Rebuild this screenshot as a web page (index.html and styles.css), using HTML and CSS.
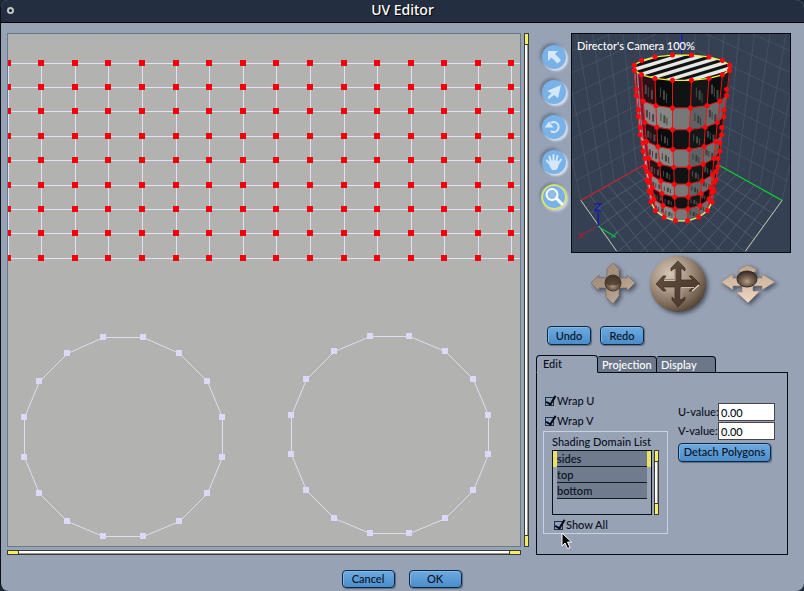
FILE: index.html
```html
<!DOCTYPE html>
<html lang="en">
<head>
<meta charset="utf-8">
<title>UV Editor</title>
<link rel="stylesheet" href="styles.css">
</head>
<body>
<div class="window">
  <header class="titlebar">
    <button class="close" aria-label="Close"></button>
    <h1>UV Editor</h1>
  </header>

  <main class="workspace">
    <section class="editor" aria-label="UV map">
      <div class="editor-row">
        <svg id="uv" class="uv" viewBox="7 33 514 514"></svg>
        <div class="slider vertical"><button aria-label="Top limit"></button><button aria-label="Bottom limit"></button></div>
      </div>
      <div class="slider horizontal"><button aria-label="Left limit"></button><button aria-label="Right limit"></button></div>
    </section>

    <aside class="side">
      <div class="preview">
        <div class="tools">
          <button class="tool" aria-label="Select"><svg viewBox="0 0 24 24"><path d="M6 6h10l-3 3 6 6-3.500 3.500-6-6-3.500 3.500z"/></svg></button>
          <button class="tool" aria-label="Move"><svg viewBox="0 0 24 24"><path d="M19 5l-3 13-4-3-5 4-1.500-1.500 4-4.500-4.500-2z"/></svg></button>
          <button class="tool" aria-label="Rotate"><svg viewBox="0 0 24 24"><path class="stroke" d="M9.500 7.500a5 5 0 1 1 0 9"/><path d="M2.500 12.500h9l-4.500-6z"/></svg></button>
          <button class="tool" aria-label="Pan"><svg viewBox="0 0 24 24"><path class="finger" d="M8 14L4.800 10.500M9 12L7.500 6.500M11.500 11.500V5M14 12L15.500 6M16 14L19 9.500"/><path d="M7.500 10.500h8.500l1 2-1 5-2 2.500h-4l-3-5z"/></svg></button>
          <button class="tool active" aria-label="Zoom"><svg viewBox="0 0 24 24"><circle class="lens" cx="10" cy="9.500" r="5.500"/><path class="handle" d="M14.500 13.500L20 19"/></svg></button>
        </div>
        <div class="viewport">
          <svg id="scene" viewBox="571 33 220 220"></svg>
          <span class="camera">Director's Camera 100%</span>
        </div>
      </div>

      <div class="navigation">
        <button class="nav" aria-label="Move in plane">
          <svg width="46" height="46" viewBox="0 0 46 46">
            <defs>
              <linearGradient id="tan" x1="0" y1="0" x2="1" y2="1"><stop offset="0" stop-color="#a18b78"/><stop offset=".5" stop-color="#aa9582"/><stop offset="1" stop-color="#cbb7a3"/></linearGradient>
              <linearGradient id="sand" x1="0" y1="0" x2="0" y2="1"><stop offset="0" stop-color="#bca48e"/><stop offset="1" stop-color="#f0d9c4"/></linearGradient>
              <linearGradient id="cross" x1="0" y1="0" x2="1" y2="1"><stop offset="0" stop-color="#65503e"/><stop offset="1" stop-color="#45352a"/></linearGradient>
              <radialGradient id="knob" cx=".5" cy=".65" r=".65"><stop offset="0" stop-color="#b8a28e"/><stop offset=".35" stop-color="#806b59"/><stop offset="1" stop-color="#33271e"/></radialGradient>
              <radialGradient id="ball" cx=".36" cy=".32" r=".72"><stop offset="0" stop-color="#d6c6b6"/><stop offset=".45" stop-color="#a99684"/><stop offset=".8" stop-color="#796553"/><stop offset="1" stop-color="#544334"/></radialGradient>
            </defs>
            <path fill="url(#tan)" stroke="#766656" stroke-width=".6" d="M23 2l6 6v9h8v-3l8 8-8 8v-3h-8v8l-6 8-7-7v-9H9v3l-8-8 8-8v3h8V8z"/>
            <circle cx="23" cy="22" r="8" fill="url(#knob)" stroke="#49382b"/><path d="M15 22a8 8 0 0 1 16 0q-8 5-16 0z" fill="#4b3a2d" opacity=".75"/>
          </svg>
        </button>
        <button class="nav" aria-label="Pan camera">
          <svg width="58" height="58" viewBox="0 0 58 58">
            <circle cx="29" cy="29" r="28" fill="url(#ball)"/>
            <path fill="url(#cross)" stroke="#3d2e22" stroke-width=".7" d="M29 6l7 7v3l-4-3v12h12l-4-4h3l8 8-8 7h-3l4-4H32v13l4-3v3l-7 7-6-7v-3l3 3V32H14l3 4h-3l-7-7 7-8h3l-3 4h12V13l-4 3v-3z"/>
            <path d="M15 25.500h11V14M32 44V32.500h13" fill="none" stroke="#cebdab" stroke-width="1"/><path d="M43 36l7-6" stroke="#ead9c7" stroke-width="1.200"/>
          </svg>
        </button>
        <button class="nav" aria-label="Move along ground">
          <svg width="56" height="46" viewBox="0 0 56 46">
            <path fill="url(#sand)" stroke="#907d6b" stroke-width=".6" d="M28 4l8 4v3h-3v6h9v-4l13 8-13 8v-4h-9v5h7L28 42 16 31h6v-6h-9v4L1 21l12-8v4h9v-6h-3V8z"/>
            <ellipse cx="27" cy="18" rx="10" ry="8" fill="url(#knob)" stroke="#35291f"/>
          </svg>
        </button>
      </div>

      <div class="history"><button class="btn">Undo</button><button class="btn">Redo</button></div>

      <div class="tabs" role="tablist">
        <button class="tab selected" role="tab" aria-selected="true">Edit</button>
        <button class="tab" role="tab" aria-selected="false">Projection</button>
        <button class="tab" role="tab" aria-selected="false">Display</button>
      </div>
      <div class="panel" role="tabpanel">
        <div class="options">
          <label class="check"><input type="checkbox" checked>Wrap U</label>
          <label class="check"><input type="checkbox" checked>Wrap V</label>
          <div class="domains">
            <h2>Shading Domain List</h2>
            <div class="list-row">
              <div class="list" role="listbox" aria-label="Shading Domain List">
                <button class="item chosen" role="option" aria-selected="true">sides</button>
                <button class="item" role="option" aria-selected="false">top</button>
                <button class="item" role="option" aria-selected="false">bottom</button>
              </div>
              <div class="slider vertical"><button aria-label="Scroll up"></button><button aria-label="Scroll down"></button></div>
            </div>
            <label class="check"><input type="checkbox" checked>Show All</label>
            <svg class="pointer" width="12" height="18" viewBox="0 0 12 18"><path d="M1 1v13l3-3 2.500 5.500 2.500-1-2.500-5.500h4z" fill="#000" stroke="#fff"/></svg>
          </div>
        </div>
        <div class="values">
          <label for="u">U-value:</label><input id="u" type="text" value="0.00">
          <label for="v">V-value:</label><input id="v" type="text" value="0.00">
          <button class="btn detach">Detach Polygons</button>
        </div>
      </div>
    </aside>
  </main>

  <footer class="actions"><button class="btn">Cancel</button><button class="btn">OK</button></footer>
</div>
<script src="scene.js"></script>
</body>
</html>
```
FILE: scene.js
```js
const xs = [8, 41, 75, 108, 142, 176, 209, 243, 276, 310, 344, 377, 411, 444, 478, 511];
const ys = [63, 87, 111, 136, 160, 185, 209, 233, 258];
const discs = [
  [[103,337],[143,337],[179,353],[207,381],[222,417],[222,457],[207,493],[179,521],[143,536],[103,536],[67,521],[39,493],[24,457],[24,417],[39,381],[67,353]],
  [[370,336],[409,336],[445,351],[473,379],[488,415],[488,454],[473,490],[445,518],[409,533],[370,533],[334,518],[306,490],[291,454],[291,415],[306,379],[334,351]]
];
const line = (x1, y1, x2, y2, c, w = 1) => `<path d="M${x1} ${y1}L${x2} ${y2}" stroke="${c}" stroke-width="${w}" fill="none"/>`;
const poly = (pts, attrs) => `<polygon points="${pts.map(p => p.join()).join(' ')}" ${attrs}/>`;

// Flat UV map: side mesh, then the two caps.
let uv = '';
ys.forEach(y => uv += line(7, y + .5, 521, y + .5, '#e3e1f7'));
xs.forEach(x => uv += line(x + .5, 63, x + .5, 258, '#e3e1f7'));
xs.forEach(x => ys.forEach(y => uv += `<rect x="${x - 3}" y="${y - 3}" width="6" height="6" fill="#f40008"/>`));
discs.forEach(d => {
  uv += poly(d.map(p => [p[0] + .5, p[1] + .5]), 'fill="none" stroke="#e0ddf0"');
  d.forEach(p => uv += `<rect x="${p[0] - 3}" y="${p[1] - 3}" width="6" height="6" fill="#dcd8f8"/>`);
});
document.getElementById('uv').innerHTML = uv;

// Perspective room.
const mix = (a, b, t) => [a[0] + (b[0] - a[0]) * t, a[1] + (b[1] - a[1]) * t];
const L = [580, 201], B = [681, 144], R = [783, 201], F = [681, 345];
const LT = [540, 20], BT = [681, -40], RT = [823, 20];
let s = '<rect x="571" y="33" width="220" height="220" fill="#354052"/>';
const net = (a, b, c, d, n, col) => {
  for (let i = 0; i <= n; i++) {
    const t = i / n;
    s += line(...mix(a, b, t), ...mix(c, d, t), col, .7) + line(...mix(a, c, t), ...mix(b, d, t), col, .7);
  }
};
net(L, B, LT, BT, 9, '#4c596b');
net(B, R, BT, RT, 9, '#4c596b');
net(L, B, F, R, 11, '#5a6879');
s += line(...L, ...B, '#c31e2b', 1.2) + line(...B, ...R, '#00d52b', 1.3);
s += line(...L, 616, 252, '#c4c6ae') + line(...R, 746, 252, '#c4c6ae');
s += line(681.5, 33, 681.5, 60, '#1717c4', 1.5);
s += line(597.5, 228, 597.5, 213, '#1616bd', 1.5) + line(597, 227, 578, 237, '#a92232') + line(597, 227, 615, 238, '#09bb43', 1.3) + line(611, 239, 617, 233, '#09bb43');
s += '<path d="M594 204.500h6l-6 7h7" fill="none" stroke="#1616bd" stroke-width="1.300"/><path d="M577 234l6 5M578 240l4-7" stroke="#a92232" fill="none"/>';

// Textured cylinder with its selected vertices.
const cy = [67, 92, 113, 131, 147, 163, 176, 187, 198];
const rt = [731, 728, 725, 723, 721, 719, 717, 715, 713];
const lf = [633, 635, 637, 639, 642, 644, 646, 648, 650];
const ry = [13, 16, 17, 19, 21, 22, 22, 23, 24];
const ring = i => Array.from({length: 16}, (_, k) => {
  const a = (k * 22.5 + 11.25) * Math.PI / 180;
  return [(rt[i] + lf[i]) / 2 + (rt[i] - lf[i]) / 2 * Math.cos(a), cy[i] + ry[i] * Math.sin(a)];
});
const rings = cy.map((_, i) => ring(i));
const dark = ['#090c0c', '#171919', '#0b0e0e', '#141717', '#101313', '#090b0b', '#281116', '#651124', '#b9b7bb'];
const light = ['#4f5252', '#5d6060', '#6c6e6e', '#606363', '#777979', '#858784', '#8c8384', '#821a31', '#c9c4c8'];
for (let i = 0; i < 8; i++) {
  for (let k = -1; k < 8; k++) {
    const j = (k + 16) % 16, m = k + 1;
    const q = [rings[i][j], rings[i][m], rings[i + 1][m], rings[i + 1][j]];
    const col = (i % 2 ? light : dark)[k + 1];
    s += poly(q, `fill="${col}" stroke="${col}" stroke-width=".5"`);
    if (k > 0 && k < 6 && k !== 3) {
      const top = mix(q[0], q[1], .5), bot = mix(q[3], q[2], .5);
      for (let n = 0; n < 3; n++) {
        const p = mix(top, bot, .3 + n * .1);
        s += `<rect x="${p[0] - 4 + n * 3}" y="${p[1]}" width="${1 + (k + n) % 2}" height="${(bot[1] - top[1]) * .35}" fill="${i % 2 ? '#242929' : '#5d625f'}" opacity=".7"/>`;
      }
    }
    if (k === 6) s += line(...mix(q[0], q[1], .6), ...mix(q[3], q[2], .6), '#9d7c84', 1.5);
  }
}
s += '<clipPath id="lid">' + poly(rings[0], '') + '</clipPath>' + poly(rings[0], 'fill="#101312"') + '<g clip-path="url(#lid)">';
for (let i = -4; i < 8; i++) {
  const y = 56 + i * 7;
  s += `<path d="M630 ${y + 14}L735 ${y - 18}" stroke="#e7e8e4" stroke-width="3.500"/>`;
}
s += '</g>';
for (let k = 0; k < 8; k++) s += `<polyline points="${rings.map(r => r[k].join()).join(' ')}" fill="none" stroke="#ed1318" stroke-width="1"/>`;
rings.forEach((r, i) => {
  if (i && i < 8) s += `<polyline points="${r.slice(0, 8).map(p => p.join()).join(' ')}" fill="none" stroke="#ed1318"/>`;
});
s += poly(rings[0], 'fill="none" stroke="#f5ed31" stroke-width="1.300"');
s += `<polyline points="${rings[8].slice(0, 8).map(p => p.join()).join(' ')}" fill="none" stroke="#f5ed72" stroke-width="1.300"/>`;
rings.forEach((r, i) => r.forEach((p, k) => {
  if (k < 8 || i === 0 || k === 8 || k === 15) s += `<path d="M${p[0] - 2.5} ${p[1] - 1.5}h1v-1h3v1h1v3h-1v1h-3v-1h-1z" fill="#fa080c"/>`;
}));
document.getElementById('scene').innerHTML = s;
```
FILE: styles.css
```css
* { box-sizing: border-box; }
body {
  margin: 0;
  background: #1c2737;
  color: #08101c;
  font: 11px/16px Lato, "Noto Sans", sans-serif;
  font-weight: 500;
}
button, input { font: inherit; color: inherit; margin: 0; padding: 0; border: 0; }
h1, h2 { margin: 0; font-weight: inherit; }
svg { display: block; }

.window {
  min-height: 100vh;
  background: #98a2b5;
  border-left: 1px solid #0c1119;
  border-radius: 8px;
  overflow: hidden;
}
.titlebar {
  display: grid;
  grid-template-columns: 20px 1fr 20px;
  align-items: center;
  height: 23px;
  padding: 0 6px 2px;
  background: #232e40;
  border-bottom: 1px solid #000;
}
.close {
  width: 7px;
  height: 7px;
  background: #111821;
  border: 2px solid #c3c5c8;
  border-radius: 50%;
}
.titlebar h1 { color: #fff; font-family: "Noto Sans", sans-serif; font-size: 14px; line-height: 20px; text-align: center; text-shadow: 1px 1px 1px #000; }

.workspace { display: flex; gap: 7px; padding: 10px 13px 0 6px; }
.editor { flex: 1; min-width: 0; }
.editor-row { display: flex; gap: 3px; margin-bottom: 3px; }
.uv { flex: 1; min-width: 0; background: #b2b2b1; outline: 1px solid #68798a; outline-offset: -1px; }
.slider {
  display: flex;
  justify-content: space-between;
  width: 5px;
  border: 1px solid #3b3b35;
  background: linear-gradient(90deg, #fff 60%, #9c918d 60%);
}
.slider.vertical { flex-direction: column; }
.slider.horizontal { width: auto; height: 5px; margin-right: 8px; background: linear-gradient(#fff 60%, #9c918d 60%); }
.slider button { background: #f1ee68; }
.vertical button { height: 11px; border-bottom: 1px solid #3b3b10; }
.vertical button:last-child { border-top: 1px solid #3b3b10; border-bottom: 0; }
.horizontal button { width: 11px; border-right: 1px solid #3b3b10; }
.horizontal button:last-child { border-left: 1px solid #3b3b10; border-right: 0; }

.side { display: flex; flex-direction: column; width: 255px; }
.preview { display: flex; }
.tools { display: flex; flex-direction: column; align-items: center; gap: 11px; width: 35px; padding-top: 12px; }
.tool {
  width: 24px;
  height: 24px;
  border-radius: 50%;
  background: #78b2e8;
  box-shadow: 2px 2px 2px #d4deec, -2px -2px 3px #6e788a, 0 0 1px 1px #a3bddb;
}
.tool svg { width: 24px; height: 24px; fill: #d5e7fa; }
.tool .stroke, .tool .finger, .tool .lens, .tool .handle { fill: none; stroke: #d5e7fa; stroke-width: 2; stroke-linecap: round; }
.tool.active { box-shadow: inset 0 0 0 1px #e5ec70, 0 0 1px 1px #d8df75, 2px 2px 3px #d4deec, -2px -2px 3px #6e788a; }
.tool .lens { stroke: #fff; fill: #92bde4; }
.tool .handle { stroke: #fff; stroke-width: 3; }
.viewport { position: relative; flex: 1; border: 1px solid #050a12; overflow: hidden; }
.viewport svg { width: 100%; }
.camera { position: absolute; left: 5px; top: 4px; color: #fff; }

.navigation { display: flex; align-items: center; gap: 13px; padding: 2px 0 0 54px; }
.nav { background: none; filter: drop-shadow(2px 2px 2px #465061); }

.btn {
  min-width: 44px;
  height: 19px;
  background: linear-gradient(#6daae0, #4b8dca);
  border: 1px solid #0c2744;
  border-radius: 4px;
  box-shadow: 1px 1px 1px #5c6b7f, inset 1px 1px 0 #80b8e8;
  line-height: 16px;
}
.history { display: flex; gap: 9px; padding: 13px 11px 10px; }

.tabs { display: flex; align-items: flex-end; height: 18px; margin-bottom: -1px; }
.tab {
  width: 59px;
  height: 17px;
  padding-left: 4px;
  text-align: left;
  color: #fff;
  background: #6d778a;
  border: 1px solid #050a12;
  border-left: 0;
  border-radius: 2px 4px 0 0;
}
.tab.selected {
  width: 62px;
  height: 18px;
  padding-left: 6px;
  color: inherit;
  background: #98a2b5;
  border-left: 1px solid #050a12;
  border-bottom-color: #98a2b5;
  border-radius: 4px 4px 0 0;
  z-index: 1;
}
.panel {
  display: flex;
  gap: 10px;
  flex: 1;
  margin-right: 3px;
  padding: 18px 12px 20px 6px;
  border: 1px solid #050a12;
}
.options { width: 125px; }
.check { display: flex; align-items: center; gap: 3px; height: 20px; padding-left: 2px; }
.check input {
  appearance: none;
  width: 9px;
  height: 9px;
  border: 1px solid #223044;
  background: #8ba1c0;
  position: relative;
}
.check input:checked::before {
  content: "";
  position: absolute;
  left: 2px;
  top: -4px;
  width: 4px;
  height: 9px;
  border: solid #050a12;
  border-width: 0 2px 2px 0;
  transform: rotate(32deg);
}
.domains { position: relative; border: 1px solid #c7d2e0; padding: 2px 8px 0; height: 103px; }
.domains h2 { font-size: 11px; line-height: 16px; white-space: nowrap; }
.list-row { display: flex; gap: 2px; }
.list { width: 100px; height: 65px; border: 1px solid #08101c; }
.item {
  display: block;
  width: 90px;
  height: 16px;
  margin-left: 4px;
  background: #707b8e;
  border-bottom: 1px solid #121c29;
  text-align: left;
  line-height: 14px;
}
.item.chosen { box-shadow: -4px 0 #e8e362, 4px 0 #e8e362; }
.pointer { position: absolute; left: 17px; top: 100px; }
.values {
  display: grid;
  grid-template-columns: 37px 57px;
  grid-auto-rows: 18px;
  column-gap: 3px;
  row-gap: 1px;
  align-content: start;
  align-items: center;
  padding-top: 12px;
}
.values label { white-space: nowrap; line-height: 16px; }
.values input { width: 57px; height: 18px; padding-left: 2px; background: #fff; border: 1px solid #49444a; }
.detach { grid-column: 1 / 3; margin: 4px 4px 0 0; }

.actions { display: flex; justify-content: center; gap: 14px; padding: 15px 2px 3px 0; }
.actions .btn { min-width: 53px; height: 18px; }
```
